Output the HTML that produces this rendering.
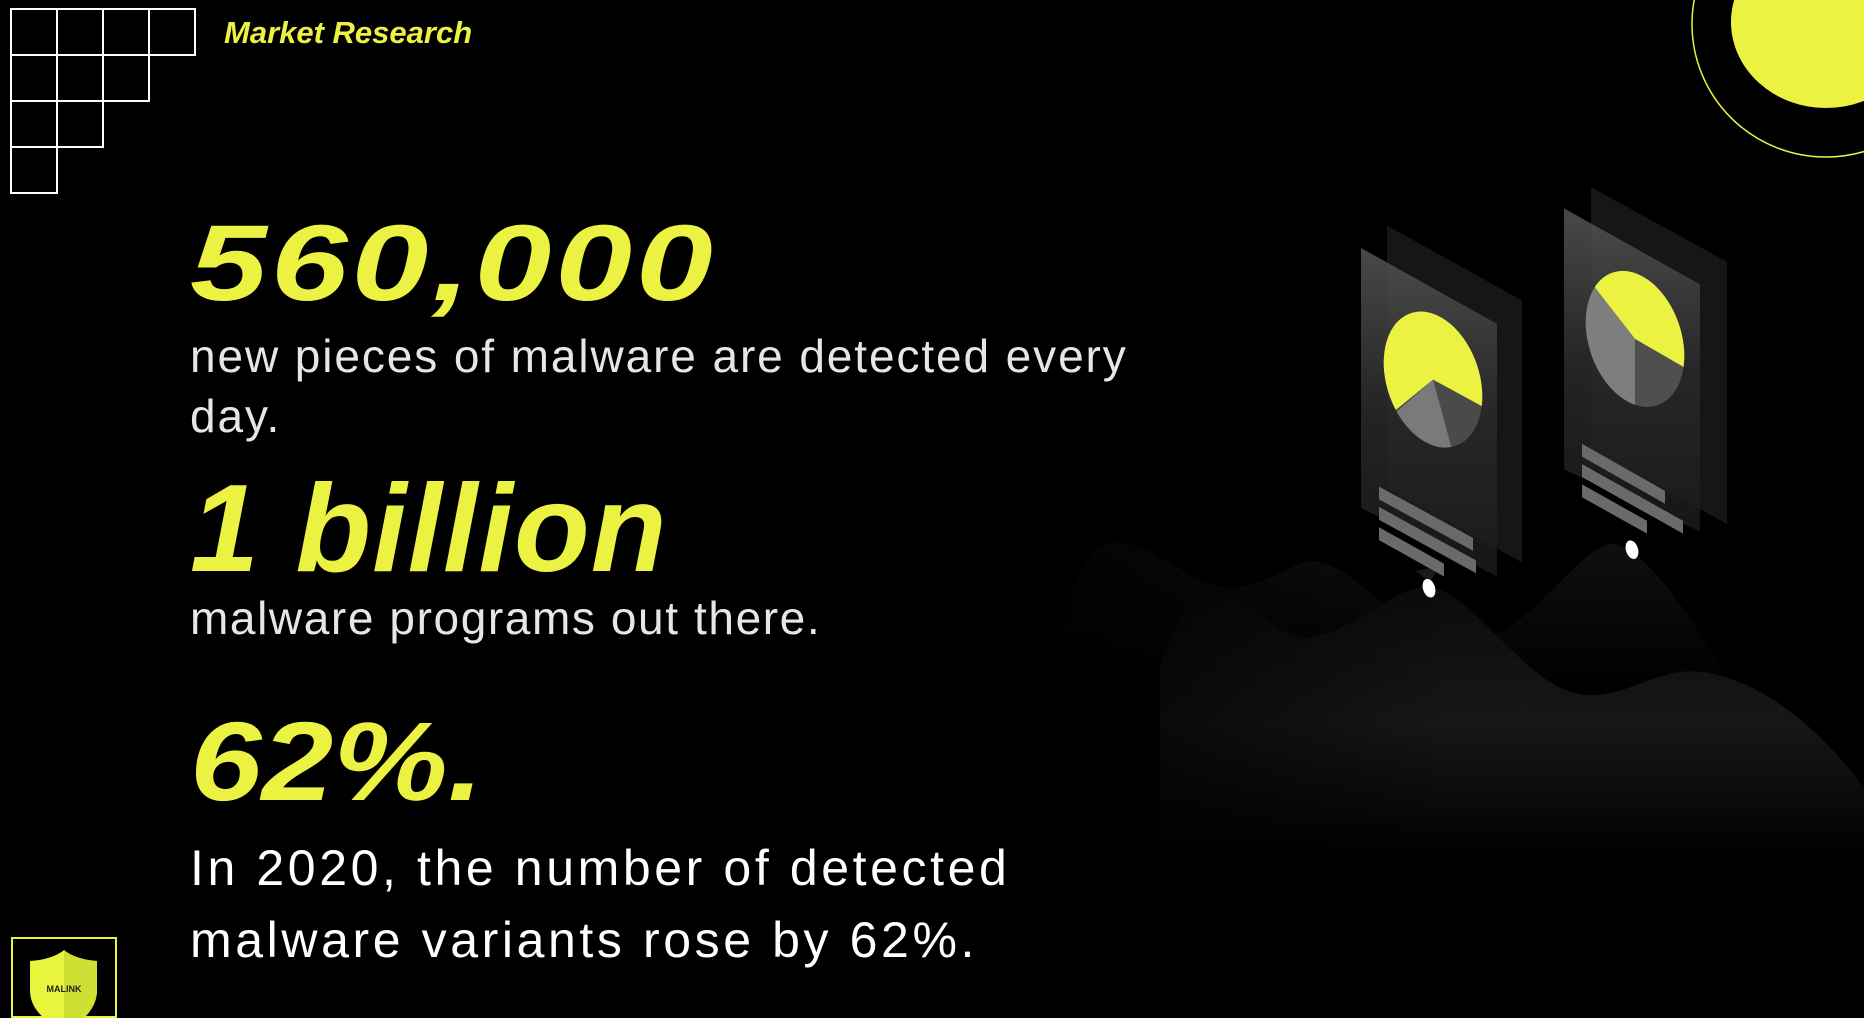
<!DOCTYPE html>
<html><head><meta charset="utf-8"><style>
html,body{margin:0;padding:0;background:#000;}
body{width:1864px;height:1018px;position:relative;overflow:hidden;font-family:"Liberation Sans",sans-serif;}
.t{position:absolute;left:190px;white-space:nowrap;margin:0;transform-origin:0 0;}
.big{color:#ecf242;font-weight:bold;font-style:italic;line-height:1;}
.sub{color:#e6e6e6;font-size:46px;line-height:60px;letter-spacing:1.9px;}
</style></head><body>
<svg width="1864" height="1018" style="position:absolute;left:0;top:0;overflow:hidden">
<defs>
<linearGradient id="mA" gradientUnits="userSpaceOnUse" x1="0" y1="500" x2="0" y2="640"><stop offset="0" stop-color="#101010"/><stop offset="1" stop-color="#000"/></linearGradient>
<linearGradient id="mB" gradientUnits="userSpaceOnUse" x1="0" y1="545" x2="0" y2="800"><stop offset="0" stop-color="#0b0b0b"/><stop offset="0.5" stop-color="#171717"/><stop offset="1" stop-color="#000"/></linearGradient>
<linearGradient id="fadeL" gradientUnits="userSpaceOnUse" x1="1080" y1="0" x2="1450" y2="0"><stop offset="0" stop-color="#fff" stop-opacity="0.25"/><stop offset="1" stop-color="#fff" stop-opacity="1"/></linearGradient>
<mask id="mk"><rect x="1000" y="300" width="900" height="800" fill="url(#fadeL)"/></mask>
<linearGradient id="pf" x1="0" y1="0" x2="0" y2="1"><stop offset="0" stop-color="#555"/><stop offset="0.5" stop-color="#2a2a2a"/><stop offset="1" stop-color="#1a1a1a"/></linearGradient>
<clipPath id="c1"><ellipse cx="1433" cy="351" rx="46" ry="66" transform="rotate(-22 1433 351)"/></clipPath>
<clipPath id="c2"><ellipse cx="1635" cy="313" rx="46" ry="66" transform="rotate(-22 1635 313)"/></clipPath>
</defs>
<g fill="none" stroke="#fff" stroke-width="2">
<rect x="11" y="9" width="46" height="46"/><rect x="57" y="9" width="46" height="46"/><rect x="103" y="9" width="46" height="46"/><rect x="149" y="9" width="46" height="46"/>
<rect x="11" y="55" width="46" height="46"/><rect x="57" y="55" width="46" height="46"/><rect x="103" y="55" width="46" height="46"/>
<rect x="11" y="101" width="46" height="46"/><rect x="57" y="101" width="46" height="46"/>
<rect x="11" y="147" width="46" height="46"/>
</g>
<ellipse cx="1826" cy="24" rx="134" ry="133" fill="none" stroke="#ecf242" stroke-width="1.5"/>
<ellipse cx="1826" cy="22" rx="95" ry="86" fill="#ecf242"/>
<g transform="matrix(1 0 0 1.07 0 4)">
<g mask="url(#mk)">
<path d="M1060 600 C1075 520,1095 503,1115 503 C1160 505,1190 545,1230 545 C1270 545,1290 520,1315 521 C1360 525,1400 595,1467 595 C1530 595,1580 500,1616 505 C1660 515,1720 620,1776 700 L1776 900 L1060 900 Z" fill="url(#mA)"/>
<path d="M1160 620 C1180 560,1200 548,1220 550 C1250 555,1275 592,1305 592 C1350 592,1395 540,1432 545 C1480 555,1530 646,1590 646 C1630 646,1660 620,1700 624 C1770 632,1830 690,1864 732 L1864 900 L1160 900 Z" fill="url(#mB)"/>
</g>
<polygon points="1387,207 1522,277 1522,522 1387,452" fill="#161616"/>
<polygon points="1361,228 1497,299 1497,535 1361,471" fill="url(#pf)" opacity="0.85"/>
<polygon points="1415,530 1430,540 1440,525" fill="#1a1a1a"/>
<g clip-path="url(#c1)">
<rect x="1370" y="270" width="130" height="160" fill="#4a4a4a"/>
<polygon points="1433,351 1380,395 1400,430 1456,430" fill="#7a7a7a"/>
<polygon points="1370,270 1500,270 1500,385 1433,351 1395,380 1370,390" fill="#ecf242"/>
</g>
<g fill="#6a6a6a">
<polygon points="1379,451 1473,499 1473,511 1379,463"/>
<polygon points="1379,470 1476,520 1476,532 1379,482"/>
<polygon points="1379,489 1444,523 1444,535 1379,501"/>
</g>
<polygon points="1591,171 1727,241 1727,486 1591,416" fill="#161616"/>
<polygon points="1564,191 1700,262 1700,493 1564,435" fill="url(#pf)" opacity="0.85"/>
<g clip-path="url(#c2)">
<rect x="1570" y="230" width="130" height="160" fill="#4f4f4f"/>
<polygon points="1635,313 1635,400 1570,400 1570,250 1595,265" fill="#7e7e7e"/>
<polygon points="1595,265 1635,313 1685,340 1700,340 1700,230 1580,230" fill="#ecf242"/>
</g>
<g fill="#6a6a6a">
<polygon points="1582,411 1665,455 1665,467 1582,423"/>
<polygon points="1582,430 1683,483 1683,495 1582,442"/>
<polygon points="1582,449 1647,483 1647,495 1582,461"/>
</g>
<ellipse cx="1429" cy="546" rx="6" ry="9" fill="#fff" transform="rotate(-20 1429 546)"/>
<ellipse cx="1632" cy="510" rx="6" ry="9" fill="#fff" transform="rotate(-20 1632 510)"/>
</g>
<rect x="12" y="938" width="104" height="79" fill="none" stroke="#ecf242" stroke-width="2"/>
<path d="M30 961 C45 960,57 956,64 950 C71 956,83 960,97 961 L97 990 C97 1003,90 1012,84 1018 L44 1018 C37 1012,30 1003,30 990 Z" fill="#e8f53c"/>
<path d="M64 950 C71 956,83 960,97 961 L97 990 C97 1003,90 1012,84 1018 L64 1018 Z" fill="#cfe035"/>
<text x="64" y="992" font-family="Liberation Sans" font-size="9" font-weight="bold" fill="#222" text-anchor="middle">MALINK</text>
</svg>
<div class="t" style="left:224px;top:17px;color:#ecf242;font-weight:bold;font-style:italic;font-size:31px;line-height:1;">Market Research</div>
<div class="t big" style="top:209px;font-size:108px;letter-spacing:3px;transform:scaleX(1.28);">560,000</div>
<div class="t sub" style="top:326px;">new pieces of malware are detected every<br>day.</div>
<div class="t big" style="top:467px;font-size:124px;letter-spacing:1px;">1 billion</div>
<div class="t sub" style="top:588px;letter-spacing:1.6px;">malware programs out there.</div>
<div class="t big" style="top:706px;font-size:112px;transform:scaleX(1.15);">62%.</div>
<div class="t" style="top:832px;color:#fff;font-size:50px;line-height:72px;letter-spacing:3.6px;">In 2020, the number of detected<br>malware variants rose by 62%.</div>
</body></html>
